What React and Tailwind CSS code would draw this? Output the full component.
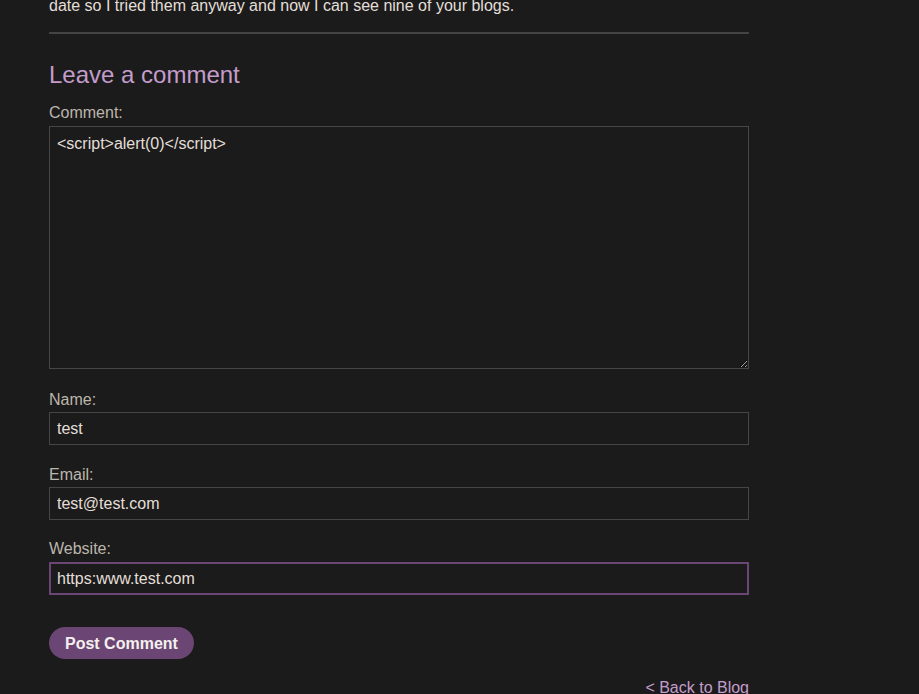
export default function App() {
  return (
    <div className="min-h-[694px] w-full overflow-hidden bg-[#1b1b1b] font-['Liberation_Sans',Arial,sans-serif] text-base text-[#e3dfd8]">
      <div className="ml-[49px] flex w-[700px] flex-col">
        <p className="mt-[-6px] h-6 leading-6 text-[#e3dfd8]">
          date so I tried them anyway and now I can see nine of your blogs.
        </p>
        <hr className="mt-[14px] h-[2px] border-0 bg-[#444444]" />
        <h2 className="mt-[26px] h-[29px] text-2xl leading-[29px] text-[#c49dcc]">Leave a comment</h2>
        <form className="flex flex-col" onSubmit={(e) => e.preventDefault()}>
          <label className="mt-3 h-6 leading-6 text-[#bdb6ac]">Comment:</label>
          <textarea
            className="mt-px h-[243px] w-full border border-[#464646] bg-[#1b1b1b] px-[7px] py-[5px] leading-6 text-[#e3dfd8] outline-none"
            defaultValue="<script>alert(0)</script>"
          />
          <label className="mt-[19px] h-6 leading-6 text-[#bdb6ac]">Name:</label>
          <input
            className="h-[33px] w-full border border-[#464646] bg-[#1b1b1b] px-[7px] text-[#e3dfd8] outline-none"
            defaultValue="test"
          />
          <label className="mt-[18px] h-6 leading-6 text-[#bdb6ac]">Email:</label>
          <input
            className="h-[33px] w-full border border-[#464646] bg-[#1b1b1b] px-[7px] text-[#e3dfd8] outline-none"
            defaultValue="test@test.com"
          />
          <label className="mt-[17px] h-6 leading-6 text-[#bdb6ac]">Website:</label>
          <input
            className="mt-px h-[33px] w-full border-2 border-[#6b4573] bg-[#1b1b1b] px-[6px] text-[#e3dfd8] outline-none"
            defaultValue="https:www.test.com"
          />
          <div>
            <button
              type="submit"
              className="mt-8 h-8 rounded-full bg-[#6b4573] px-4 pt-px text-base font-bold text-[#f3f0ee]"
            >
              Post Comment
            </button>
          </div>
        </form>
        <div className="mt-[17px] flex h-6 justify-end leading-6">
          <a href="#" className="text-[#c49dcc]">&lt; Back to Blog</a>
        </div>
      </div>
    </div>
  );
}
